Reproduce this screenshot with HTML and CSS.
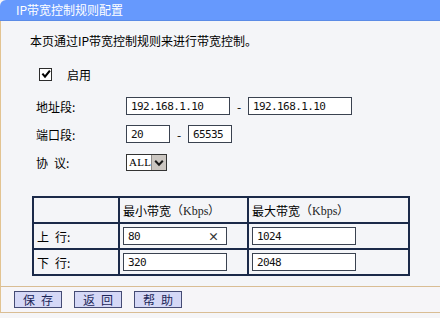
FILE: index.html
```html
<!DOCTYPE html>
<html lang="zh-CN">
<head>
<meta charset="utf-8">
<title>IP带宽控制规则配置</title>
<link rel="stylesheet" href="styles.css">
</head>
<body>
<div class="page">
  <div class="title">IP带宽控制规则配置</div>
  <div class="content">
    <div class="intro">本页通过IP带宽控制规则来进行带宽控制。</div>
    <div class="enable-row">
      <span class="checkbox"><svg width="10" height="10" viewBox="0 0 10 10"><path d="M1.4 4.6 L4 7.6 L8.9 1.6" fill="none" stroke="#000" stroke-width="2.1"/></svg></span>
      <span class="enable-label">启用</span>
    </div>
    <div class="field-row addr-row">
      <span class="label">地址段:</span>
      <input class="txt w-long" type="text" value="192.168.1.10">
      <span class="dash">-</span>
      <input class="txt w-long" type="text" value="192.168.1.10">
    </div>
    <div class="field-row port-row">
      <span class="label">端口段:</span>
      <input class="txt w-short" type="text" value="20">
      <span class="dash">-</span>
      <input class="txt w-short" type="text" value="65535">
    </div>
    <div class="field-row proto-row">
      <span class="label">协&ensp;议:</span>
      <span class="select">
        <span class="select-value">ALL</span>
        <span class="select-arrow"><svg width="10" height="8" viewBox="0 0 10 8"><path d="M1.2 1.8 L5 5.8 L8.8 1.8" fill="none" stroke="#1a1a1a" stroke-width="2"/></svg></span>
      </span>
    </div>
    <div class="bw-table">
      <div class="cell"></div>
      <div class="cell">最小带宽<span class="unit">（Kbps）</span></div>
      <div class="cell">最大带宽<span class="unit">（Kbps）</span></div>
      <div class="cell">上&ensp;行:</div>
      <div class="cell"><span class="input-wrap"><input class="txt w-long" type="text" value="80"><span class="clear">×</span></span></div>
      <div class="cell"><input class="txt w-long" type="text" value="1024"></div>
      <div class="cell">下&ensp;行:</div>
      <div class="cell"><input class="txt w-long" type="text" value="320"></div>
      <div class="cell"><input class="txt w-long" type="text" value="2048"></div>
    </div>
  </div>
  <div class="footer">
    <button class="btn" type="button">保&ensp;存</button>
    <button class="btn" type="button">返&ensp;回</button>
    <button class="btn" type="button">帮&ensp;助</button>
  </div>
</div>
</body>
</html>
```

FILE: styles.css
```css
html, body {
  margin: 0;
  padding: 0;
}
body {
  background: #f5f5f7;
  font-family: "Noto Sans CJK SC", "Liberation Sans", sans-serif;
  font-size: 12px;
  color: #000;
}
.page {
  width: 440px;
}
.title {
  height: 20px;
  line-height: 20px;
  background: #6699fd;
  border-bottom: 1px solid #5b8be6;
  border-top-left-radius: 6px;
  color: #fff;
  font-size: 12px;
  padding-left: 16px;
}
.content {
  border-left: 1px solid #e2c391;
  border-bottom: 1px solid #d9bd94;
  background: #f4f5f8;
  padding: 10px 0 10px 0;
}
.intro {
  margin-left: 29px;
  height: 20px;
  line-height: 20px;
}
.enable-row {
  margin-top: 13px;
  margin-left: 38px;
  height: 20px;
  display: flex;
  align-items: center;
}
.checkbox {
  width: 13px;
  height: 13px;
  box-sizing: border-box;
  border: 1px solid #2c2c2c;
  background: #fff;
  display: flex;
  align-items: center;
  justify-content: center;
}
.enable-label {
  margin-left: 15px;
}
.field-row {
  margin-left: 35px;
  display: flex;
  align-items: center;
  height: 18px;
}
.addr-row { margin-top: 13px; }
.port-row { margin-top: 10px; }
.proto-row { margin-top: 11px; height: 17px; }
.label {
  width: 90px;
  flex: none;
}
.txt {
  box-sizing: border-box;
  height: 18px;
  border: 1px solid #3a4250;
  background: #fff;
  padding: 0 0 0 4px;
  margin: 0;
  font-family: "DejaVu Sans Mono", monospace;
  font-size: 11px;
  letter-spacing: -0.6px;
  color: #111;
  outline: none;
}
.w-long { width: 104px; }
.w-short { width: 44px; }
.dash {
  width: 18px;
  text-align: center;
  flex: none;
}
.select {
  display: flex;
  box-sizing: border-box;
  width: 41px;
  height: 17px;
  border: 1px solid #333;
  background: #fff;
}
.select-value {
  flex: 1;
  font-family: "Liberation Serif", serif;
  font-size: 11px;
  line-height: 15px;
  padding-left: 2px;
  letter-spacing: 0.3px;
}
.select-arrow {
  width: 16px;
  background: #cbc6c1;
  border-left: 1px solid #8d8a88;
  display: flex;
  align-items: center;
  justify-content: center;
}
.bw-table {
  margin-top: 25px;
  margin-left: 31px;
  width: 378px;
  box-sizing: border-box;
  display: grid;
  grid-template-columns: 84px 127px 159px;
  grid-template-rows: 24px 24px 24px;
  gap: 2px;
  padding: 2px;
  background: #1b2a49;
}
.cell {
  background: #f4f5f8;
  display: flex;
  align-items: center;
  padding-left: 3px;
}
.unit {
  font-family: "Liberation Serif", serif;
  font-size: 12px;
  color: #222;
}
.input-wrap {
  position: relative;
  display: flex;
}
.clear {
  position: absolute;
  right: 8px;
  top: 0;
  line-height: 18px;
  font-size: 11px;
  font-weight: bold;
  color: #333;
}
.footer {
  border-left: 1px solid #e2c391;
  border-bottom: 1px solid #d9bd94;
  background: #f6f5f8;
  padding: 4px 0 4px 13px;
  display: flex;
  gap: 12px;
}
.btn {
  box-sizing: border-box;
  width: 48px;
  height: 17px;
  margin: 0;
  padding: 0;
  background: #d5d8f6;
  border: 1px solid #454b74;
  color: #1c2658;
  font-family: "Noto Sans CJK SC", sans-serif;
  font-size: 12px;
  line-height: 15px;
}
```
